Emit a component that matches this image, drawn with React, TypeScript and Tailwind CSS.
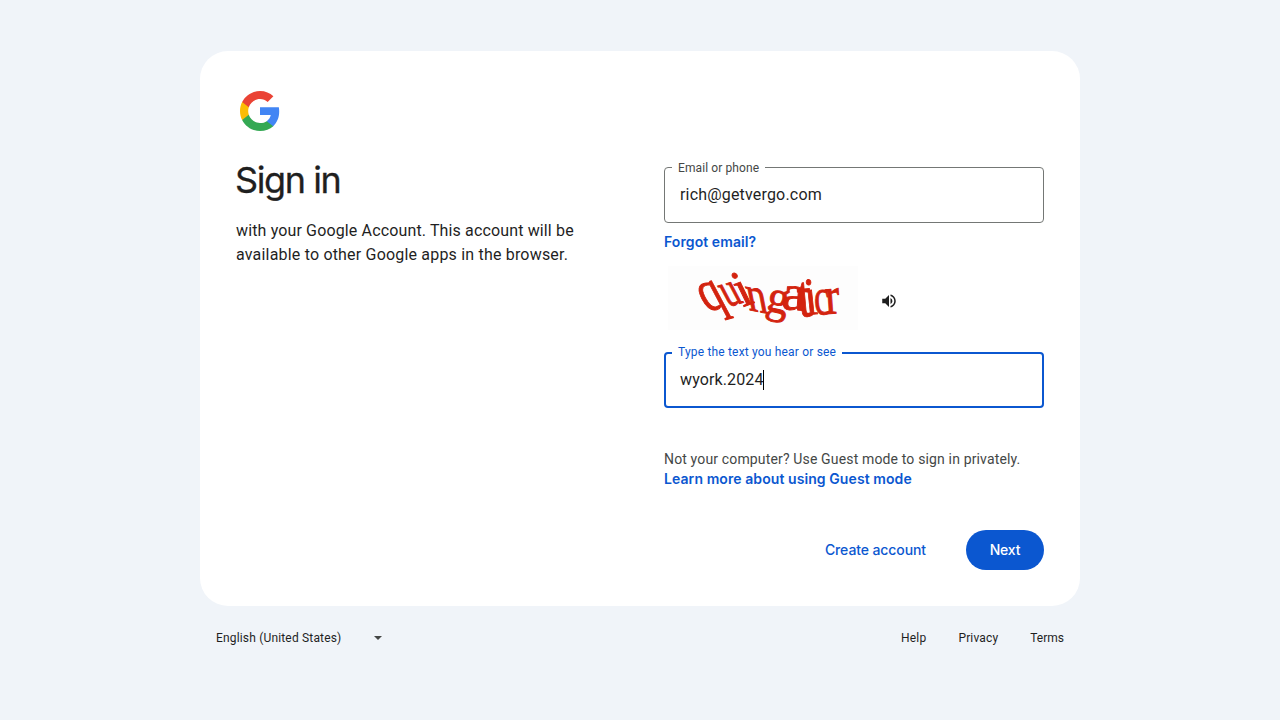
import type { ReactNode } from "react";

function GoogleLogo() {
  return (
    <svg className="h-12 w-12" viewBox="-2.4 -2.4 52.8 52.8" aria-hidden="true">
      <path fill="#4285F4" d="M45.12 24.5c0-1.56-.14-3.06-.4-4.5H24v8.51h11.84c-.51 2.75-2.06 5.08-4.39 6.64v5.52h7.11c4.16-3.83 6.56-9.47 6.56-16.17z" />
      <path fill="#34A853" d="M24 46c5.94 0 10.92-1.97 14.56-5.33l-7.11-5.52c-1.97 1.32-4.49 2.1-7.45 2.1-5.73 0-10.58-3.87-12.31-9.07H4.34v5.7C7.96 41.07 15.4 46 24 46z" />
      <path fill="#FBBC05" d="M11.69 28.18C11.25 26.86 11 25.45 11 24s.25-2.86.69-4.18v-5.7H4.34C2.85 17.09 2 20.45 2 24c0 3.55.85 6.91 2.34 9.88l7.35-5.7z" />
      <path fill="#EA4335" d="M24 10.75c3.23 0 6.13 1.11 8.41 3.29l6.31-6.31C34.91 4.18 29.93 2 24 2 15.4 2 7.96 6.93 4.34 14.12l7.35 5.7c1.73-5.2 6.58-9.07 12.31-9.07z" />
    </svg>
  );
}

const letters = [
  { ch: "q", t: "translate(39 46) rotate(-16) skewX(12) scale(.74 1)", size: 60 },
  { ch: "u", t: "translate(60 41) rotate(-16) skewX(12) scale(.68 1)", size: 50 },
  { ch: "i", t: "translate(75 41) rotate(-20) skewX(6) scale(.9 1)", size: 53 },
  { ch: "n", t: "translate(81 44) rotate(11) skewX(22) scale(.86 1)", size: 48 },
  { ch: "g", t: "translate(97 44) rotate(12) scale(.96 1)", size: 46 },
  { ch: "a", t: "translate(113 43) rotate(4) scale(1.1 1)", size: 50 },
  { ch: "t", t: "translate(131 51) rotate(-5) scale(.84 1)", size: 60 },
  { ch: "i", t: "translate(138 49) rotate(-6) scale(.85 1)", size: 53 },
  { ch: "c", t: "translate(147 49) rotate(-4) scale(.68 1)", size: 52 },
  { ch: "r", t: "translate(158 48) rotate(-4) scale(.82 1)", size: 53 },
];

function Captcha() {
  return (
    <svg className="h-16 w-[190px] overflow-visible bg-[#fdfdfd]" viewBox="0 0 190 64">
      <g className="font-['Liberation_Serif',serif]" fill="#d3230f" stroke="#d3230f" strokeWidth=".9">
        {letters.map((l, i) => (
          <text key={i} transform={l.t} fontSize={l.size}>{l.ch}</text>
        ))}
      </g>
    </svg>
  );
}

function Field({ label, active = false, children }: { label: string; active?: boolean; children: ReactNode }) {
  return (
    <div className={active ? "relative flex h-14 items-center rounded border-2 border-[#0b57d0] px-3.5" : "relative flex h-14 items-center rounded border border-[#747775] px-[15px]"}>
      <span className={active ? "absolute -top-2.5 left-1.5 bg-white px-1.5 text-xs leading-4 tracking-[0.18px] whitespace-nowrap text-[#0b57d0]" : "absolute -top-2 left-[7px] bg-white px-1.5 text-xs leading-4 tracking-[0.1px] whitespace-nowrap text-[#444746]"}>
        {label}
      </span>
      {children}
    </div>
  );
}

export default function App() {
  return (
    <div className="flex h-screen flex-col items-center overflow-hidden bg-[#f0f4f9] pt-[51px] font-[Roboto,sans-serif] text-[#1f1f1f]">
      <main className="h-[555px] w-[880px] rounded-[28px] bg-white p-9">
        <GoogleLogo />
        <div className="mt-[23px] grid grid-cols-[380px_380px] gap-12">
          <section>
            <h1 className="-ml-px font-[Inter,sans-serif] text-4xl leading-[44px] tracking-[-1.4px] [-webkit-text-stroke:0.3px_#1f1f1f]">Sign in</h1>
            <p className="mt-[17px] text-base leading-6 tracking-[0.14px]">
              with your Google Account. This account will be<br /><span className="tracking-[0.19px]">available to other Google apps in the browser.</span>
            </p>
          </section>
          <section className="pt-[9px]">
            <Field label="Email or phone">
              <span className="text-base tracking-[0.18px]">rich@getvergo.com</span>
            </Field>
            <a className="mt-[9px] block font-[Inter,sans-serif] text-sm leading-5 font-semibold tracking-[0.08px] text-[#0b57d0]">Forgot email?</a>
            <div className="mt-3.5 ml-1 flex h-16 items-center gap-[22px]">
              <Captcha />
              <svg className="mt-1.5 h-[18px] w-[18px]" viewBox="0 0 24 24" fill="#1f1f1f">
                <path d="M3 9v6h4l5 5V4L7 9H3zm13.5 3A4.5 4.5 0 0 0 14 7.97v8.05c1.48-.73 2.5-2.25 2.5-4.02zM14 3.23v2.06c2.89.86 5 3.54 5 6.71s-2.11 5.85-5 6.71v2.06c4.01-.91 7-4.49 7-8.77s-2.99-7.86-7-8.77z" />
              </svg>
            </div>
            <div className="mt-[22px]">
              <Field label="Type the text you hear or see" active>
                <span className="text-base tracking-[0.12px]">wyork.2024</span>
                <span className="-ml-px h-5 w-px bg-black" />
              </Field>
            </div>
            <p className="mt-[41px] text-sm leading-5 tracking-[0.15px] whitespace-nowrap text-[#444746]">Not your computer? Use Guest mode to sign in privately.</p>
            <a className="block font-[Inter,sans-serif] text-sm leading-5 font-semibold tracking-[0.08px] text-[#0b57d0]">Learn more about using Guest mode</a>
            <div className="mt-[41px] flex h-10 items-center justify-end gap-10">
              <button className="font-[Inter,sans-serif] text-sm font-medium tracking-[-0.1px] text-[#0b57d0]">Create account</button>
              <button className="h-10 w-[78px] rounded-full bg-[#0b57d0] font-[Inter,sans-serif] text-sm font-medium tracking-[-0.2px] text-white">Next</button>
            </div>
          </section>
        </div>
      </main>
      <footer className="mt-6 flex w-[848px] items-center justify-between text-xs leading-4">
        <div className="flex items-center gap-[33px]">
          <span className="tracking-[0.17px]">English (United States)</span>
          <svg className="h-1 w-2" viewBox="0 0 8 4"><path d="M0 0h8L4 4z" fill="#444746" /></svg>
        </div>
        <nav className="flex gap-8">
          <a className="tracking-[0.2px]">Help</a>
          <a className="tracking-[0.15px]">Privacy</a>
          <a>Terms</a>
        </nav>
      </footer>
    </div>
  );
}
